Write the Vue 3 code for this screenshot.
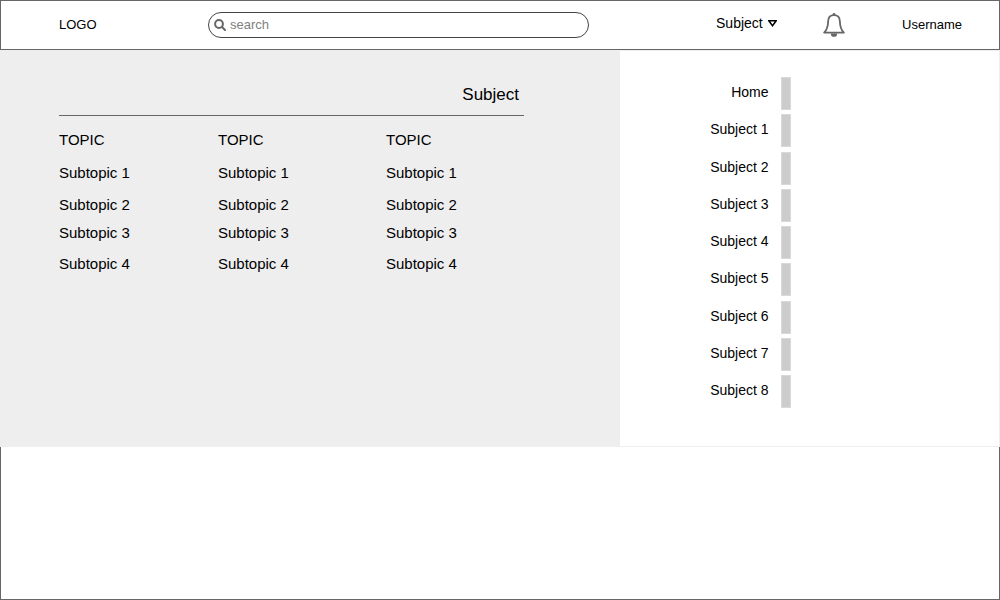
<script setup>
import { ref } from 'vue'

const query = ref('')
const subject = ref('Subject')

const topics = [1, 2, 3]
const subtopics = ['Subtopic 1', 'Subtopic 2', 'Subtopic 3', 'Subtopic 4']
const links = ['Home', ...Array.from({ length: 8 }, (_, i) => `Subject ${i + 1}`)]
</script>

<template>
  <div class="page">
    <header class="topbar">
      <a class="logo" href="#">LOGO</a>
      <label class="search">
        <svg class="search-icon" viewBox="0 0 12 12" aria-hidden="true">
          <circle cx="5" cy="5" r="3.9" />
          <path d="M8 8l3 3" />
        </svg>
        <input v-model="query" type="text" placeholder="search" aria-label="search" />
      </label>
      <div class="tools">
        <div class="picker">
          <select v-model="subject" aria-label="Subject">
            <option>Subject</option>
          </select>
          <svg class="arrow" viewBox="0 0 9 7" aria-hidden="true">
            <path d="M0.8 0.8H8.2L4.5 5.7Z" />
          </svg>
        </div>
        <button class="bell" type="button" aria-label="Notifications">
          <svg viewBox="0 0 22 24" aria-hidden="true">
            <path class="dome" d="M11 2.2C7.2 2.2 5.2 4.8 5.1 8.4C5 14 3.6 17 1.2 19.7H20.8C18.4 17 17 14 16.9 8.4C16.8 4.8 14.8 2.2 11 2.2Z" />
            <path class="solid" d="M9.6 2.4V1.4A1.4 1.4 0 0 1 12.4 1.4V2.4ZM7.8 20.4H14.2A3.2 3.4 0 0 1 7.8 20.4Z" />
          </svg>
        </button>
        <a class="user" href="#">Username</a>
      </div>
    </header>

    <main class="body">
      <section class="content">
        <h1>Subject</h1>
        <div class="columns">
          <section v-for="t in topics" :key="t">
            <h2>TOPIC</h2>
            <ul>
              <li v-for="s in subtopics" :key="s"><a href="#">{{ s }}</a></li>
            </ul>
          </section>
        </div>
      </section>
      <nav class="side">
        <ul>
          <li v-for="l in links" :key="l"><a href="#">{{ l }}</a></li>
        </ul>
      </nav>
    </main>

    <footer class="rest"></footer>
  </div>
</template>

<style>
body {
  margin: 0;
  background: #fff;
}
</style>

<style scoped>
.page {
  min-height: 100vh;
  display: flex;
  flex-direction: column;
  font-family: "Liberation Sans", Arial, sans-serif;
  font-size: 13px;
  color: #000;
}
.page * {
  box-sizing: border-box;
}
a {
  color: inherit;
  text-decoration: none;
}
ul {
  list-style: none;
  margin: 0;
  padding: 0;
}
.topbar {
  display: flex;
  align-items: center;
  height: 50px;
  padding: 0 37px 0 58px;
  border: 1px solid #666;
}
.logo {
  width: 149px;
  padding-bottom: 2px;
}
.search {
  flex: 0 1 381px;
  display: flex;
  align-items: center;
  gap: 4px;
  height: 26px;
  padding: 0 12px 0 5px;
  border: 1px solid #444;
  border-radius: 13px;
}
.search-icon {
  width: 12px;
  height: 12px;
  fill: none;
  stroke: #666;
  stroke-width: 2;
  stroke-linecap: round;
}
.search input {
  flex: 1;
  min-width: 0;
  padding: 0 0 2px;
  border: 0;
  outline: 0;
  background: none;
  font: inherit;
}
.search input::placeholder {
  color: #808080;
  opacity: 1;
}
.tools {
  display: flex;
  align-items: center;
  margin-left: auto;
}
.picker {
  display: flex;
  align-items: center;
  position: relative;
  padding-bottom: 4px;
  margin-right: 46px;
}
.picker select {
  appearance: none;
  width: 61px;
  padding: 0;
  border: 0;
  background: none;
  font: inherit;
  font-size: 14px;
  color: inherit;
}
.arrow {
  position: absolute;
  right: 0;
  top: 5px;
  width: 9px;
  height: 7px;
  fill: none;
  stroke: #000;
  stroke-width: 1.5;
  pointer-events: none;
}
.bell {
  padding: 0;
  margin-right: 57px;
  border: 0;
  background: none;
}
.bell svg {
  display: block;
  width: 22px;
  height: 24px;
}
.dome {
  fill: none;
  stroke: #666;
  stroke-width: 1.8;
  stroke-linejoin: round;
}
.solid {
  fill: #666;
}
.user {
  padding-bottom: 2px;
}
.body {
  display: grid;
  grid-template-columns: 62fr 38fr;
}
.content {
  padding: 33px 96px 0 59px;
  background: #eee;
}
h1 {
  margin: 0;
  padding: 0 5px 9px 0;
  border-bottom: 1px solid #666;
  font-size: 17px;
  font-weight: 400;
  line-height: 23px;
  text-align: right;
}
.columns {
  display: grid;
  grid-template-columns: 159fr 168fr 138fr;
  padding-top: 9px;
  font-size: 15px;
}
h2 {
  margin: 0;
  font-size: 15px;
  font-weight: 400;
  line-height: 30px;
}
.columns ul {
  display: grid;
  grid-template-rows: 32px 28px 31px 28px;
  padding-top: 4px;
}
.columns li {
  line-height: 28px;
}
.side {
  padding: 26px 0 38px;
  border: 1px solid #eee;
  border-left: 0;
}
.side ul {
  display: flex;
  flex-direction: column;
  justify-content: space-between;
  width: 45%;
  height: 331px;
}
.side li {
  display: flex;
  justify-content: flex-end;
  gap: 12px;
  height: 33px;
}
.side li::after {
  content: "";
  box-sizing: border-box;
  width: 10px;
  border: 1px solid #d9d9d9;
  background: #ccc;
}
.side a {
  font-size: 14px;
  line-height: 31px;
}
.rest {
  flex: 1;
  border: 1px solid #666;
  border-top: 0;
}
</style>
